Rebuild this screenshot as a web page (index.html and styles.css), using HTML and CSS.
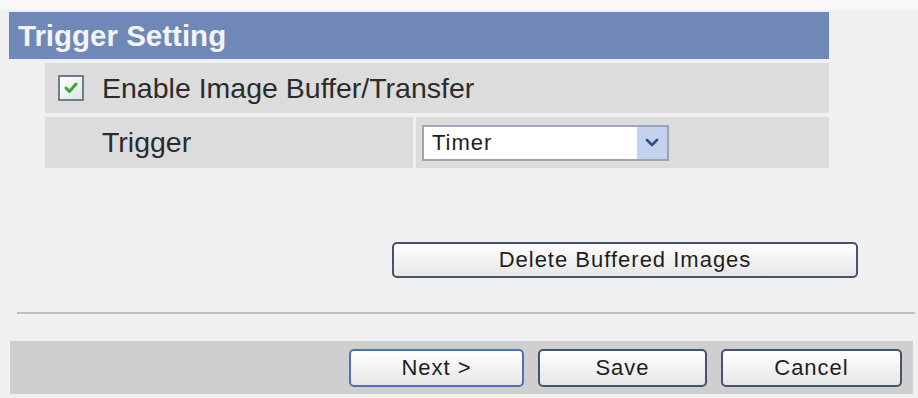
FILE: index.html
```html
<!DOCTYPE html>
<html lang="en">
<head>
    <meta charset="UTF-8">
    <title>Trigger Setting</title>
    <link rel="stylesheet" href="styles.css">
</head>
<body>
    <div class="page">
        <div class="section-title">Trigger Setting</div>

        <div class="settings">
            <div class="row">
                <label class="check-label">
                    <span class="checkbox">
                        <svg width="18" height="16" viewBox="0 0 18 16"><path d="M4 8 L7.5 11.5 L14 4" fill="none" stroke="#3aa53a" stroke-width="3" stroke-linecap="round" stroke-linejoin="round"/></svg>
                    </span>
                    Enable Image Buffer/Transfer
                </label>
            </div>
            <div class="row row-split">
                <div class="cell-label">Trigger</div>
                <div class="cell-value">
                    <div class="select">
                        <span class="select-text">Timer</span>
                        <span class="select-arrow">
                            <svg width="14" height="10" viewBox="0 0 14 10"><path d="M2 2 L7 7 L12 2" fill="none" stroke="#2e4f8f" stroke-width="2.6" stroke-linecap="round" stroke-linejoin="round"/></svg>
                        </span>
                    </div>
                </div>
            </div>
        </div>

        <div class="delete-wrap">
            <button class="btn btn-delete">Delete Buffered Images</button>
        </div>

        <hr class="separator">

        <div class="footer">
            <button class="btn btn-default btn-next">Next &gt;</button>
            <button class="btn btn-save">Save</button>
            <button class="btn btn-cancel">Cancel</button>
        </div>
    </div>
</body>
</html>
```

FILE: styles.css
```css
body {
    margin: 0;
    background-color: #f0f0f0;
    font-family: "Liberation Sans", Arial, sans-serif;
    color: #333;
}
.page {
    width: 918px;
    height: 398px;
    padding-top: 12px;
    box-sizing: border-box;
    background: linear-gradient(#f8f8f8 0, #f8f8f8 9px, #f0f0f0 10px);
}
.section-title {
    margin-left: 9px;
    width: 820px;
    height: 47px;
    line-height: 47px;
    padding-left: 9px;
    box-sizing: border-box;
    background-color: #6f88b8;
    color: #f3f4f7;
    font-size: 29.5px;
    font-weight: bold;
}
.settings {
    margin-left: 45px;
    width: 784px;
    margin-top: 4px;
}
.row {
    height: 50px;
    background-color: #dcdcdc;
    display: flex;
    align-items: center;
    font-size: 28.5px;
    color: #2b2b2b;
}
.row-split {
    margin-top: 4px;
    height: 51px;
    background: none;
    gap: 3px;
}
.check-label {
    display: flex;
    align-items: center;
    padding-left: 13px;
}
.checkbox {
    width: 26px;
    height: 26px;
    box-sizing: border-box;
    border: 2px solid #6c7b8e;
    background: linear-gradient(135deg, #ffffff, #dfe6df);
    display: flex;
    align-items: center;
    justify-content: center;
    margin-right: 18px;
}
.cell-label {
    width: 368px;
    height: 100%;
    background-color: #dcdcdc;
    display: flex;
    align-items: center;
    padding-left: 57px;
    box-sizing: border-box;
}
.cell-value {
    flex: 1;
    height: 100%;
    background-color: #dcdcdc;
    display: flex;
    align-items: center;
    padding-left: 6px;
}
.select {
    width: 247px;
    height: 36px;
    box-sizing: border-box;
    border: 2px solid #9aa6b4;
    background-color: #fff;
    display: flex;
    align-items: stretch;
}
.select-text {
    flex: 1;
    display: flex;
    align-items: center;
    padding-left: 8px;
    font-size: 22px;
    letter-spacing: 1px;
    color: #1e1e1e;
}
.select-arrow {
    width: 30px;
    background-color: #c4d2ee;
    display: flex;
    align-items: center;
    justify-content: center;
}
.delete-wrap {
    margin-top: 74px;
    padding-left: 392px;
}
.btn {
    height: 38px;
    box-sizing: border-box;
    border: 2px solid #43546c;
    border-radius: 5px;
    background: linear-gradient(#ffffff, #e6e6e6);
    font-family: "Liberation Sans", Arial, sans-serif;
    font-size: 22px;
    letter-spacing: 1px;
    color: #1e1e1e;
    padding: 0;
    cursor: pointer;
}
.btn-delete {
    width: 466px;
    height: 36px;
}
.separator {
    margin: 34px 3px 0 17px;
    border: none;
    border-top: 2px solid #c0c0b8;
    height: 0;
}
.footer {
    margin: 27px 5px 0 10px;
    height: 53px;
    background-color: #cfcfcf;
    display: flex;
    align-items: center;
    justify-content: flex-end;
    padding-right: 11px;
    gap: 14px;
}
.btn-default {
    border-color: #4a72b4;
}
.btn-next {
    width: 175px;
}
.btn-save {
    width: 169px;
}
.btn-cancel {
    width: 181px;
}
```
